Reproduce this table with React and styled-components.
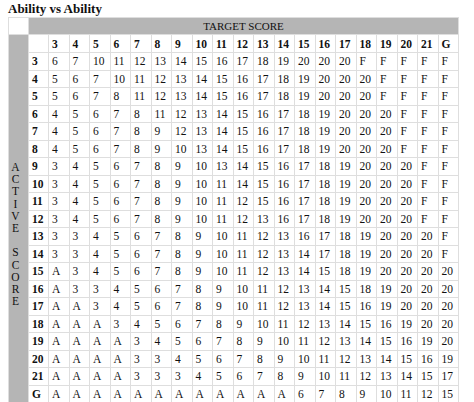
import React from 'react';
import styled, { createGlobalStyle } from 'styled-components';

const GlobalStyle = createGlobalStyle`
  body {
    margin: 0;
    background: #fff;
    font-family: "Liberation Serif", "Times New Roman", serif;
    color: #111;
  }
`;

const Page = styled.div`
  padding: 0 8px;
`;

const Title = styled.h1`
  margin: 0;
  height: 17px;
  font-size: 13px;
  line-height: 18px;
  font-weight: bold;
`;

const Grid = styled.div`
  display: grid;
  width: fit-content;
  grid-template-columns: 19px 19px repeat(20, 19.5px);
  grid-template-rows: 16px 17px repeat(20, 16.5px);
  gap: 1px;
  padding: 1px;
  background: #dedede;
`;

const Corner = styled.div`
  background: #fff;
`;

const TargetHeader = styled.div`
  grid-column: 2 / -1;
  background: #b5b5b5;
  display: flex;
  align-items: center;
  justify-content: center;
  font-size: 11px;
`;

const SideHeader = styled.div`
  grid-column: 1;
  grid-row: 2 / span 21;
  background: #b5b5b5;
  display: flex;
  flex-direction: column;
  align-items: center;
  padding: 126px 6px 0 0;
  font-size: 11.5px;
  line-height: 12.2px;
`;

const Cell = styled.div`
  background: #fff;
  display: flex;
  align-items: center;
  padding-left: 3px;
  font-size: 11.5px;
  font-weight: ${(p) => (p.$bold ? 'bold' : 'normal')};
  white-space: nowrap;
`;

const labels = ['3', '4', '5', '6', '7', '8', '9', '10', '11', '12', '13', '14', '15', '16', '17', '18', '19', '20', '21', 'G'];

const rows = [
  '6 7 10 11 12 13 14 15 16 17 18 19 20 20 20 F F F F F',
  '5 6 7 10 11 12 13 14 15 16 17 18 19 20 20 20 F F F F',
  '5 6 7 8 11 12 13 14 15 16 17 18 19 20 20 20 F F F F',
  '4 5 6 7 8 11 12 13 14 15 16 17 18 19 20 20 20 F F F',
  '4 5 6 7 8 9 12 13 14 15 16 17 18 19 20 20 20 F F F',
  '4 5 6 7 8 9 10 13 14 15 16 17 18 19 20 20 20 F F F',
  '3 4 5 6 7 8 9 10 13 14 15 16 17 18 19 20 20 20 F F',
  '3 4 5 6 7 8 9 10 11 14 15 16 17 18 19 20 20 20 F F',
  '3 4 5 6 7 8 9 10 11 12 15 16 17 18 19 20 20 20 F F',
  '3 4 5 6 7 8 9 10 11 12 13 16 17 18 19 20 20 20 F F',
  '3 3 4 5 6 7 8 9 10 11 12 13 16 17 18 19 20 20 20 F',
  '3 3 4 5 6 7 8 9 10 11 12 13 14 17 18 19 20 20 20 F',
  'A 3 4 5 6 7 8 9 10 11 12 13 14 15 18 19 20 20 20 20',
  'A 3 3 4 5 6 7 8 9 10 11 12 13 14 15 18 19 20 20 20',
  'A A 3 4 5 6 7 8 9 10 11 12 13 14 15 16 19 20 20 20',
  'A A A 3 4 5 6 7 8 9 10 11 12 13 14 15 16 19 20 20',
  'A A A A 3 4 5 6 7 8 9 10 11 12 13 14 15 16 19 20',
  'A A A A 3 3 4 5 6 7 8 9 10 11 12 13 14 15 16 19',
  'A A A A 3 3 3 4 5 6 7 8 9 10 11 12 13 14 15 17',
  'A A A A A A A A A A A A 6 7 8 9 10 11 12 15',
].map((r) => r.split(' '));

const sideLetters = ['A', 'C', 'T', 'I', 'V', 'E', '\u00a0', 'S', 'C', 'O', 'R', 'E'];

export default function App() {
  return (
    <Page>
      <GlobalStyle />
      <Title>Ability vs Ability</Title>
      <Grid>
        <Corner />
        <TargetHeader>TARGET SCORE</TargetHeader>
        <SideHeader>
          {sideLetters.map((l, i) => (
            <span key={i}>{l}</span>
          ))}
        </SideHeader>
        <Cell />
        {labels.map((l) => (
          <Cell key={'h' + l} $bold>
            {l}
          </Cell>
        ))}
        {rows.map((row, i) => (
          <React.Fragment key={labels[i]}>
            <Cell $bold>{labels[i]}</Cell>
            {row.map((v, j) => (
              <Cell key={j}>{v}</Cell>
            ))}
          </React.Fragment>
        ))}
      </Grid>
    </Page>
  );
}
